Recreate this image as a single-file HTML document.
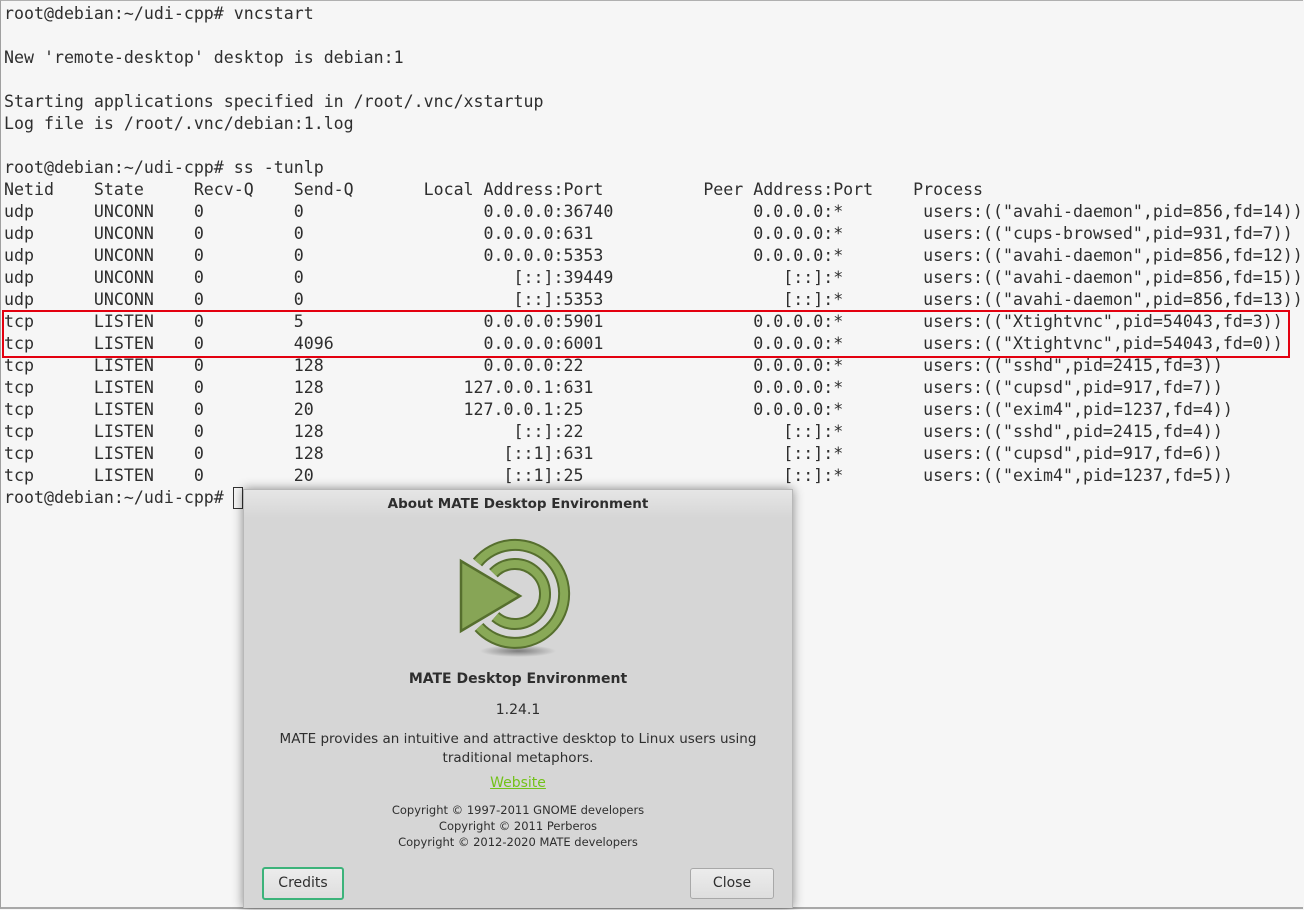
<!DOCTYPE html>
<html><head><meta charset="utf-8"><style>
html,body{margin:0;padding:0;}
body{width:1304px;height:910px;background:#f6f6f6;position:relative;overflow:hidden;}
#frame{position:absolute;left:0;top:0;width:1302px;height:906px;border-left:1px solid #a0a0a0;border-top:1px solid #b0b0b0;border-bottom:2px solid #a8a8a8;}
pre{position:absolute;left:4px;top:3px;margin:0;font-family:"DejaVu Sans Mono","Liberation Mono",monospace;font-size:16.6px;line-height:22px;color:#2e2e2e;}
#red{position:absolute;left:2px;top:310px;width:1284px;height:44px;border:2px solid #e3000f;}
#cur{position:absolute;left:233px;top:487px;width:8px;height:20px;border:1px solid #333;}
#dlg{position:absolute;left:243px;top:489px;width:548px;height:418px;background:#d6d6d6;box-shadow:0 0 10px rgba(0,0,0,.45);border:1px solid #b8b8b8;border-bottom:none;font-family:"DejaVu Sans","Liberation Sans",sans-serif;color:#2e2e2e;text-align:center;}
#tb{height:28px;background:linear-gradient(#e6e6e6,#d6d6d6);font-weight:bold;font-size:13.5px;line-height:28px;}
.t{position:absolute;left:0;right:0;white-space:nowrap;}
.btn{position:absolute;top:378px;height:29px;border:1px solid #a8a8a8;border-radius:3px;background:linear-gradient(#ececec,#dedede);font-size:14px;line-height:29px;}
</style></head><body>
<div id="frame"></div>
<pre>root@debian:~/udi-cpp# vncstart

New 'remote-desktop' desktop is debian:1

Starting applications specified in /root/.vnc/xstartup
Log file is /root/.vnc/debian:1.log

root@debian:~/udi-cpp# ss -tunlp
Netid    State     Recv-Q    Send-Q       Local Address:Port          Peer Address:Port    Process
udp      UNCONN    0         0                  0.0.0.0:36740              0.0.0.0:*        users:(("avahi-daemon",pid=856,fd=14))
udp      UNCONN    0         0                  0.0.0.0:631                0.0.0.0:*        users:(("cups-browsed",pid=931,fd=7))
udp      UNCONN    0         0                  0.0.0.0:5353               0.0.0.0:*        users:(("avahi-daemon",pid=856,fd=12))
udp      UNCONN    0         0                     [::]:39449                 [::]:*        users:(("avahi-daemon",pid=856,fd=15))
udp      UNCONN    0         0                     [::]:5353                  [::]:*        users:(("avahi-daemon",pid=856,fd=13))
tcp      LISTEN    0         5                  0.0.0.0:5901               0.0.0.0:*        users:(("Xtightvnc",pid=54043,fd=3))
tcp      LISTEN    0         4096               0.0.0.0:6001               0.0.0.0:*        users:(("Xtightvnc",pid=54043,fd=0))
tcp      LISTEN    0         128                0.0.0.0:22                 0.0.0.0:*        users:(("sshd",pid=2415,fd=3))
tcp      LISTEN    0         128              127.0.0.1:631                0.0.0.0:*        users:(("cupsd",pid=917,fd=7))
tcp      LISTEN    0         20               127.0.0.1:25                 0.0.0.0:*        users:(("exim4",pid=1237,fd=4))
tcp      LISTEN    0         128                   [::]:22                    [::]:*        users:(("sshd",pid=2415,fd=4))
tcp      LISTEN    0         128                  [::1]:631                   [::]:*        users:(("cupsd",pid=917,fd=6))
tcp      LISTEN    0         20                   [::1]:25                    [::]:*        users:(("exim4",pid=1237,fd=5))
root@debian:~/udi-cpp# </pre>
<div id="red"></div>
<div id="cur"></div>
<div id="dlg">
<div id="tb">About MATE Desktop Environment</div>
<svg style="position:absolute;left:0;top:0" width="548" height="180" viewBox="243 489 548 180">
<defs><radialGradient id="sh"><stop offset="0" stop-color="#555" stop-opacity=".7"/><stop offset="1" stop-color="#555" stop-opacity="0"/></radialGradient></defs>
<ellipse cx="517" cy="650" rx="38" ry="6" fill="url(#sh)"/>
<g fill="none">
<path d="M476.5 561.5 A49 49 0 1 1 478 626" stroke="#566f2e" stroke-width="12"/>
<path d="M476.5 561.5 A49 49 0 1 1 478 626" stroke="#89a957" stroke-width="8"/>
<path d="M492.4 572.2 A30 30 0 1 1 494.3 615.6" stroke="#566f2e" stroke-width="12"/>
<path d="M492.4 572.2 A30 30 0 1 1 494.3 615.6" stroke="#89a957" stroke-width="8"/>
</g>
<path d="M460 560 L519 595 L460 630 Z" fill="#87a556" stroke="#566f2e" stroke-width="2.5" stroke-linejoin="miter"/>
</svg>
<div class="t" style="top:181px;font-weight:bold;font-size:14px;">MATE Desktop Environment</div>
<div class="t" style="top:212px;font-size:14px;">1.24.1</div>
<div class="t" style="top:240px;font-size:13.5px;line-height:19px;">MATE provides an intuitive and attractive desktop to Linux users using<br>traditional metaphors.</div>
<div class="t" style="top:285px;font-size:14px;"><span style="color:#73c21a;text-decoration:underline;">Website</span></div>
<div class="t" style="top:312px;font-size:11.5px;line-height:16px;">Copyright © 1997-2011 GNOME developers<br>Copyright © 2011 Perberos<br>Copyright © 2012-2020 MATE developers</div>
<div class="btn" style="left:18px;width:78px;border:2px solid #3cb37a;top:377px;">Credits</div>
<div class="btn" style="left:446px;width:82px;">Close</div>
</div>
</body></html>
